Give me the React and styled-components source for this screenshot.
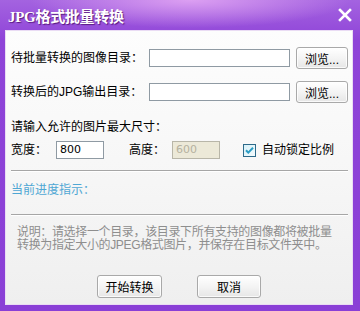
import React from "react";
import styled, { createGlobalStyle } from "styled-components";

const Global = createGlobalStyle`
  html, body { margin: 0; padding: 0; background: #fff; }
  body { font-family: "Liberation Sans", "Noto Sans CJK SC", sans-serif; font-size: 12px; }
`;

const Window = styled.div`
  width: 360px;
  height: 311px;
  box-sizing: border-box;
  padding: 0 7px 6px 5px;
  display: flex;
  flex-direction: column;
  background:
    radial-gradient(ellipse 160px 28px at 190px 0px, rgba(230, 170, 245, 0.85), rgba(230, 170, 245, 0) 100%),
    linear-gradient(180deg, #a463e0 0%, #8f44d8 40px, #8a3fd6 100%);
`;

const TitleBar = styled.div`
  height: 30px;
  flex: none;
  display: flex;
  align-items: center;
  justify-content: space-between;
  padding: 0 1px 0 3px;
`;

const Title = styled.span`
  font-family: "Liberation Serif", "Noto Sans CJK SC", serif;
  font-weight: bold;
  font-size: 15px;
  color: #fff;
  letter-spacing: -0.3px;
  text-shadow: 1px 1px 1px rgba(60, 0, 90, 0.7);
`;

const Close = styled.svg`
  width: 14px;
  height: 14px;
  margin-top: -1px;
`;

const Panel = styled.div`
  flex: 1;
  border: 1px solid #eadcf4;
  background: linear-gradient(180deg, #fdfdfd 0%, #f6f6f6 55%, #efefef 100%);
  display: flex;
  flex-direction: column;
  padding: 16px 4px 0 5px;
`;

const PathRow = styled.div`
  display: flex;
  align-items: center;
  gap: 6px;
  height: 22px;
  margin-top: ${(p) => p.$gap || 0}px;
`;

const Label = styled.span`
  color: #000;
  line-height: 16px;
  white-space: nowrap;
  box-sizing: border-box;
  width: ${(p) => (p.$w ? `${p.$w}px` : "auto")};
  padding-left: ${(p) => p.$indent || 0}px;
  flex: none;
`;

const TextBox = styled.div`
  box-sizing: border-box;
  width: ${(p) => p.$w}px;
  height: 18px;
  border: 1px solid ${(p) => (p.$disabled ? "#b8b6a8" : "#8f9aa3")};
  background: ${(p) => (p.$disabled ? "#ece9d8" : "#fff")};
  color: ${(p) => (p.$disabled ? "#b5b19f" : "#000")};
  font-family: "DejaVu Sans", sans-serif;
  font-size: 11px;
  line-height: 16px;
  padding-left: 3px;
  flex: none;
`;

const Button = styled.div`
  box-sizing: border-box;
  width: ${(p) => p.$w}px;
  height: ${(p) => p.$h || 22}px;
  border: 1px solid #a9a9a9;
  border-radius: 3px;
  background: linear-gradient(180deg, #ffffff 0%, #f4f4f4 50%, #e6e6e6 100%);
  box-shadow: inset 0 0 0 1px rgba(255, 255, 255, 0.8);
  display: flex;
  align-items: center;
  justify-content: center;
  color: #000;
  font-size: 12px;
  flex: none;
`;

const Line = styled.div`
  line-height: 16px;
  color: ${(p) => p.$color || "#000"};
  margin-top: ${(p) => p.$gap || 0}px;
`;

const SizeRow = styled.div`
  display: flex;
  align-items: center;
  height: 18px;
  margin-top: 6px;
`;

const Check = styled.svg`
  width: 13px;
  height: 13px;
  flex: none;
  margin: 0 6px 0 23px;
`;

const Separator = styled.div`
  height: 1px;
  background: #a6a6a6;
  box-shadow: 0 1px 0 #ffffff;
  margin: ${(p) => p.$top}px 0 0 0;
`;

const Note = styled.div`
  margin: 11px 0 0 6px;
  color: #8e8e8e;
  line-height: 13px;
  font-size: 12px;
  letter-spacing: -0.35px;
`;

const Actions = styled.div`
  display: flex;
  gap: 35px;
  margin: 23px 0 0 86px;
`;

export default function App() {
  return (
    <Window>
      <Global />
      <TitleBar>
        <Title>JPG格式批量转换</Title>
        <Close viewBox="0 0 14 14">
          <path d="M2 2 L12 12 M12 2 L2 12" stroke="#fff" strokeWidth="2.6" strokeLinecap="square" />
        </Close>
      </TitleBar>
      <Panel>
        <PathRow>
          <Label $w={132}>待批量转换的图像目录：</Label>
          <TextBox $w={141} />
          <Button $w={52}>浏览...</Button>
        </PathRow>
        <PathRow $gap={12}>
          <Label $w={132}>转换后的JPG输出目录：</Label>
          <TextBox $w={141} />
          <Button $w={52}>浏览...</Button>
        </PathRow>
        <Line $gap={16}>请输入允许的图片最大尺寸：</Line>
        <SizeRow>
          <Label $w={45}>宽度：</Label>
          <TextBox $w={48}>800</TextBox>
          <Label $w={68} $indent={25}>高度：</Label>
          <TextBox $w={48} $disabled>600</TextBox>
          <Check viewBox="0 0 13 13">
            <defs>
              <linearGradient id="cb" x1="0" y1="0" x2="1" y2="1">
                <stop offset="0" stopColor="#d6f0f8" />
                <stop offset="1" stopColor="#f4fbfd" />
              </linearGradient>
            </defs>
            <rect x="0.5" y="0.5" width="12" height="12" fill="url(#cb)" stroke="#2d6a8a" />
            <path d="M3 6.2 L5.3 8.6 L10 3.8" fill="none" stroke="#2a9cc4" strokeWidth="2" />
          </Check>
          <Label>自动锁定比例</Label>
        </SizeRow>
        <Separator $top={11} />
        <Line $gap={11} $color="#4fa7d4">当前进度指示：</Line>
        <Separator $top={16} />
        <Note>
          说明：请选择一个目录，该目录下所有支持的图像都将被批量
          <br />
          转换为指定大小的JPEG格式图片，并保存在目标文件夹中。
        </Note>
        <Actions>
          <Button $w={65} $h={23}>开始转换</Button>
          <Button $w={64} $h={23}>取消</Button>
        </Actions>
      </Panel>
    </Window>
  );
}
